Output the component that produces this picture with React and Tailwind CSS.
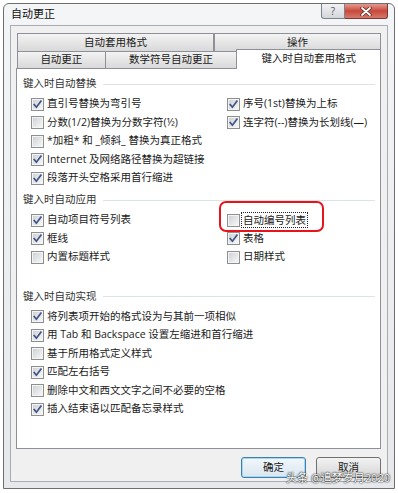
import React, { useId } from "react";

const FONT = { fontFamily: '"Open Sans", "Noto Sans CJK SC", sans-serif' };

function Box({ checked }) {
  const id = useId().replace(/:/g, "");
  return (
    <svg width="13" height="13" viewBox="0 0 13 13" className="shrink-0">
      <defs>
        <linearGradient id={`g${id}`} x1="0" y1="0" x2="1" y2="1">
          <stop offset="0" stopColor="#cfd2d6" />
          <stop offset="1" stopColor="#f6f6f6" />
        </linearGradient>
      </defs>
      <rect x="0.5" y="0.5" width="12" height="12" fill="#f4f4f4" stroke="#8e8f8f" />
      <rect x="2" y="2" width="9" height="9" fill={`url(#g${id})`} />
      {checked && (
        <path d="M3.2 6.6 L5.4 9.2 L9.9 3.2" fill="none" stroke="#3f5487" strokeWidth="1.7" strokeLinecap="square" />
      )}
    </svg>
  );
}

function Row({ checked, label, focus }) {
  return (
    <div className="flex items-center h-[18.5px] whitespace-nowrap">
      <Box checked={checked} />
      {focus ? (
        <span className="ml-[1px] px-[1px] border border-dotted border-[#222] leading-[14px]">{label}</span>
      ) : (
        <span className="ml-[3px]">{label}</span>
      )}
    </div>
  );
}

function Title({ children }) {
  return (
    <div className="flex items-center h-[18px] pr-[5px]">
      <span className="text-[#333]">{children}</span>
      <div className="flex-1 h-px bg-[#dde2e8] ml-[6px]" />
    </div>
  );
}

function Tab({ children, w, h, extra = "" }) {
  return (
    <div
      className={`flex items-center justify-center border border-b-0 border-[#8d9097] bg-gradient-to-b from-[#f3f3f3] to-[#d9d9d9] text-[#1a1a1a] ${extra}`}
      style={{ width: w, height: h }}
    >
      {children}
    </div>
  );
}

export default function App() {
  return (
    <div className="w-[398px] h-[493px] bg-white relative text-[10.5px] text-[#1a1a1a]" style={FONT}>
      <div className="absolute left-[3px] top-[3px] w-[392px] h-[486px] rounded-t-[6px] border border-[#6e6e6e] bg-gradient-to-b from-[#f4f5f7] to-[#e6e8eb] flex flex-col px-[6px] pb-[6px]">
        {/* title bar */}
        <div className="flex h-[21px] shrink-0">
          <div className="self-center pl-[1px] text-[11px] text-[#111]">自动更正</div>
          <div className="flex-1" />
          <div className="flex h-[15px]">
            <div className="w-[24px] h-[15px] rounded-bl-[3px] border border-t-0 border-[#7d8188] bg-gradient-to-b from-[#f2f3f5] to-[#d3d6da] flex items-center justify-center text-[10px] text-[#555] leading-none">?</div>
            <div className="w-[43px] h-[15px] rounded-br-[3px] border border-t-0 border-l-0 border-[#7a3a33] bg-gradient-to-b from-[#e29a8f] via-[#c8483a] to-[#d5786c] flex items-center justify-center">
              <svg width="12" height="9" viewBox="0 0 12 9">
                <path d="M2 1 L10 8 M10 1 L2 8" stroke="#5a2a24" strokeWidth="3.4" strokeLinecap="round" />
                <path d="M2 1 L10 8 M10 1 L2 8" stroke="#fff" strokeWidth="1.8" strokeLinecap="round" />
              </svg>
            </div>
          </div>
        </div>

        {/* client */}
        <div className="flex-1 bg-[#f0f0f0] border border-[#a9adb3] flex flex-col pl-[5px] pr-[6px] pt-[7px]">
          {/* tabs */}
          <div className="flex flex-col pl-[1px]">
            <div className="flex h-[18px]">
              <Tab w={197} h={18}>自动套用格式</Tab>
              <Tab w={167} h={18}>操作</Tab>
            </div>
            <div className="flex h-[17px] items-end">
              <Tab w={89} h={17}>自动更正</Tab>
              <Tab w={133} h={17} extra="-ml-[1px]">数学符号自动更正</Tab>
              <div className="-ml-[1px] w-[145px] h-[20px] -mb-[1px] relative z-10 bg-white border border-b-0 border-[#8d9097] flex items-center justify-center pb-[1px]">
                键入时自动套用格式
              </div>
            </div>
          </div>

          {/* panel */}
          <div className="h-[381px] bg-white border border-[#8d9097] flex flex-col pt-[6px] pl-[6px]">
            <Title>键入时自动替换</Title>
            <div className="mt-[2px] ml-[8px] grid grid-cols-[196px_1fr]">
              <Row checked label="直引号替换为弯引号" />
              <Row checked label="序号(1st)替换为上标" />
              <Row label="分数(1/2)替换为分数字符(½)" />
              <Row checked label="连字符(--)替换为长划线(—)" />
              <Row label="*加粗* 和 _倾斜_ 替换为真正格式" />
              <div />
              <Row checked label="Internet 及网络路径替换为超链接" />
              <div />
              <Row checked label="段落开头空格采用首行缩进" />
              <div />
            </div>

            <div className="mt-[3.5px]">
              <Title>键入时自动应用</Title>
            </div>
            <div className="mt-[2px] ml-[8px] grid grid-cols-[196px_1fr]">
              <Row checked label="自动项目符号列表" />
              <div className="relative">
                <Row label="自动编号列表" focus />
                <div className="absolute left-[-8px] top-[-10px] w-[105px] h-[31px] rounded-[7px] border-2 border-[#e8141b] pointer-events-none" />
              </div>
              <Row checked label="框线" />
              <Row checked label="表格" />
              <Row label="内置标题样式" />
              <Row label="日期样式" />
            </div>

            <div className="mt-[21px]">
              <Title>键入时自动实现</Title>
            </div>
            <div className="mt-[2px] ml-[8px] flex flex-col">
              <Row checked label="将列表项开始的格式设为与其前一项相似" />
              <Row checked label="用 Tab 和 Backspace 设置左缩进和首行缩进" />
              <Row label="基于所用格式定义样式" />
              <Row checked label="匹配左右括号" />
              <Row label="删除中文和西文文字之间不必要的空格" />
              <Row checked label="插入结束语以匹配备忘录样式" />
            </div>
          </div>

          {/* buttons */}
          <div className="flex justify-end gap-[10px] mt-[8px]">
            <div className="w-[65px] h-[21px] rounded-[3px] border border-[#3c7fb1] bg-gradient-to-b from-[#f2f7fb] to-[#d9e6f0] shadow-[inset_0_0_0_1px_#a8d8f0] flex items-center justify-center">确定</div>
            <div className="w-[65px] h-[21px] rounded-[3px] border border-[#707070] bg-gradient-to-b from-[#f2f2f2] to-[#d6d6d6] flex items-center justify-center">取消</div>
          </div>
        </div>
      </div>

      {/* watermark */}
      <div className="absolute right-[8px] top-[471px] text-[11px] leading-[14px] text-white whitespace-nowrap [text-shadow:0_0_2px_#222,0_0_1px_#000]">
        头条 @追梦岁月2020
      </div>
    </div>
  );
}
